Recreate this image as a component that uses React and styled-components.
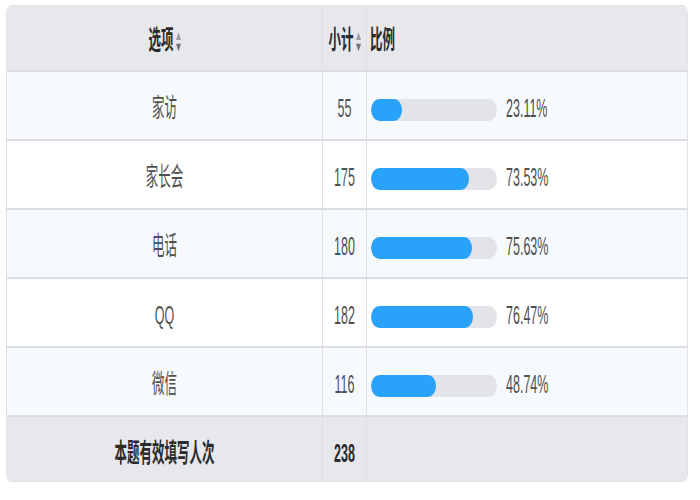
import React from "react";
import styled, { createGlobalStyle } from "styled-components";

const Global = createGlobalStyle`
  html, body { margin: 0; padding: 0; background: #ffffff; }
  body { font-family: "Liberation Sans", "Noto Sans CJK SC", sans-serif; }
`;

const Page = styled.div`
  padding: 5px 12px 0 6px;
`;

const Table = styled.div`
  border: 1px solid #e1e2e5;
  border-radius: 5px / 10px;
  overflow: hidden;
  box-shadow: 0 1px 1px rgba(0, 0, 0, 0.06);
  display: grid;
  grid-template-columns: 316px 44px 1fr;
`;

const Cell = styled.div`
  display: flex;
  align-items: center;
  justify-content: ${(p) => p.$align || "center"};
  height: ${(p) => p.$h}px;
  box-sizing: border-box;
  padding: ${(p) => p.$pt || 8}px ${(p) => p.$px || 0}px 0;
  background: ${(p) => p.$bg};
  border-bottom: ${(p) => (p.$last ? "none" : "2px solid #dcdde0")};
  border-right: ${(p) => (p.$end ? "none" : "1px solid #dedfe2")};
  font-size: 12.5px;
  color: ${(p) => (p.$bold ? "#2b2b2b" : "#4f4f4f")};
  font-weight: ${(p) => (p.$bold ? 700 : 400)};
`;

const Stretch = styled.span`
  display: inline-flex;
  align-items: center;
  white-space: nowrap;
  line-height: 1;
  transform: scaleY(2.1);
`;

const SortIcon = styled.svg`
  margin-left: 2px;
  width: 5px;
  height: 9px;
`;

const Ratio = styled.div`
  display: flex;
  align-items: center;
  gap: 9px;
`;

const Track = styled.div`
  width: 126px;
  height: 22px;
  border-radius: 8px / 11px;
  background: #e3e4e7;
  overflow: hidden;
`;

const Fill = styled.div`
  height: 100%;
  border-radius: 8px / 11px;
  background: #29a2fa;
`;

const Sort = () => (
  <SortIcon viewBox="0 0 5 9">
    <path d="M2.5 0 L5 3.6 L0 3.6 Z" fill="#9a9ca0" />
    <path d="M0 5.4 L5 5.4 L2.5 9 Z" fill="#6f7175" />
  </SortIcon>
);

const rows = [
  { name: "家访", n: 55, p: 23.11 },
  { name: "家长会", n: 175, p: 73.53 },
  { name: "电话", n: 180, p: 75.63 },
  { name: "QQ", n: 182, p: 76.47 },
  { name: "微信", n: 116, p: 48.74 },
];

const HEAD = "#e7e8eb";

export default function App() {
  return (
    <>
      <Global />
      <Page>
        <Table>
          <Cell $h={66} $pt={6} $bg={HEAD} $bold>
            <Stretch>
              选项
              <Sort />
            </Stretch>
          </Cell>
          <Cell $h={66} $pt={6} $bg={HEAD} $bold>
            <Stretch>
              小计
              <Sort />
            </Stretch>
          </Cell>
          <Cell $h={66} $pt={6} $bg={HEAD} $bold $align="flex-start" $px={3} $end>
            <Stretch>比例</Stretch>
          </Cell>
          {rows.map((r, i) => {
            const bg = i % 2 === 0 ? "#f7fafd" : "#ffffff";
            return (
              <React.Fragment key={r.name}>
                <Cell $h={69} $bg={bg}>
                  <Stretch>{r.name}</Stretch>
                </Cell>
                <Cell $h={69} $bg={bg}>
                  <Stretch>{r.n}</Stretch>
                </Cell>
                <Cell $h={69} $bg={bg} $align="flex-start" $px={4} $end>
                  <Ratio>
                    <Track>
                      <Fill style={{ width: `${(r.p * 1.335).toFixed(1)}px` }} />
                    </Track>
                    <Stretch>{r.p.toFixed(2)}%</Stretch>
                  </Ratio>
                </Cell>
              </React.Fragment>
            );
          })}
          <Cell $h={64} $pt={10} $bg={HEAD} $bold $last>
            <Stretch>本题有效填写人次</Stretch>
          </Cell>
          <Cell $h={64} $pt={10} $bg={HEAD} $bold $last>
            <Stretch>238</Stretch>
          </Cell>
          <Cell $h={64} $bg={HEAD} $last $end />
        </Table>
      </Page>
    </>
  );
}
